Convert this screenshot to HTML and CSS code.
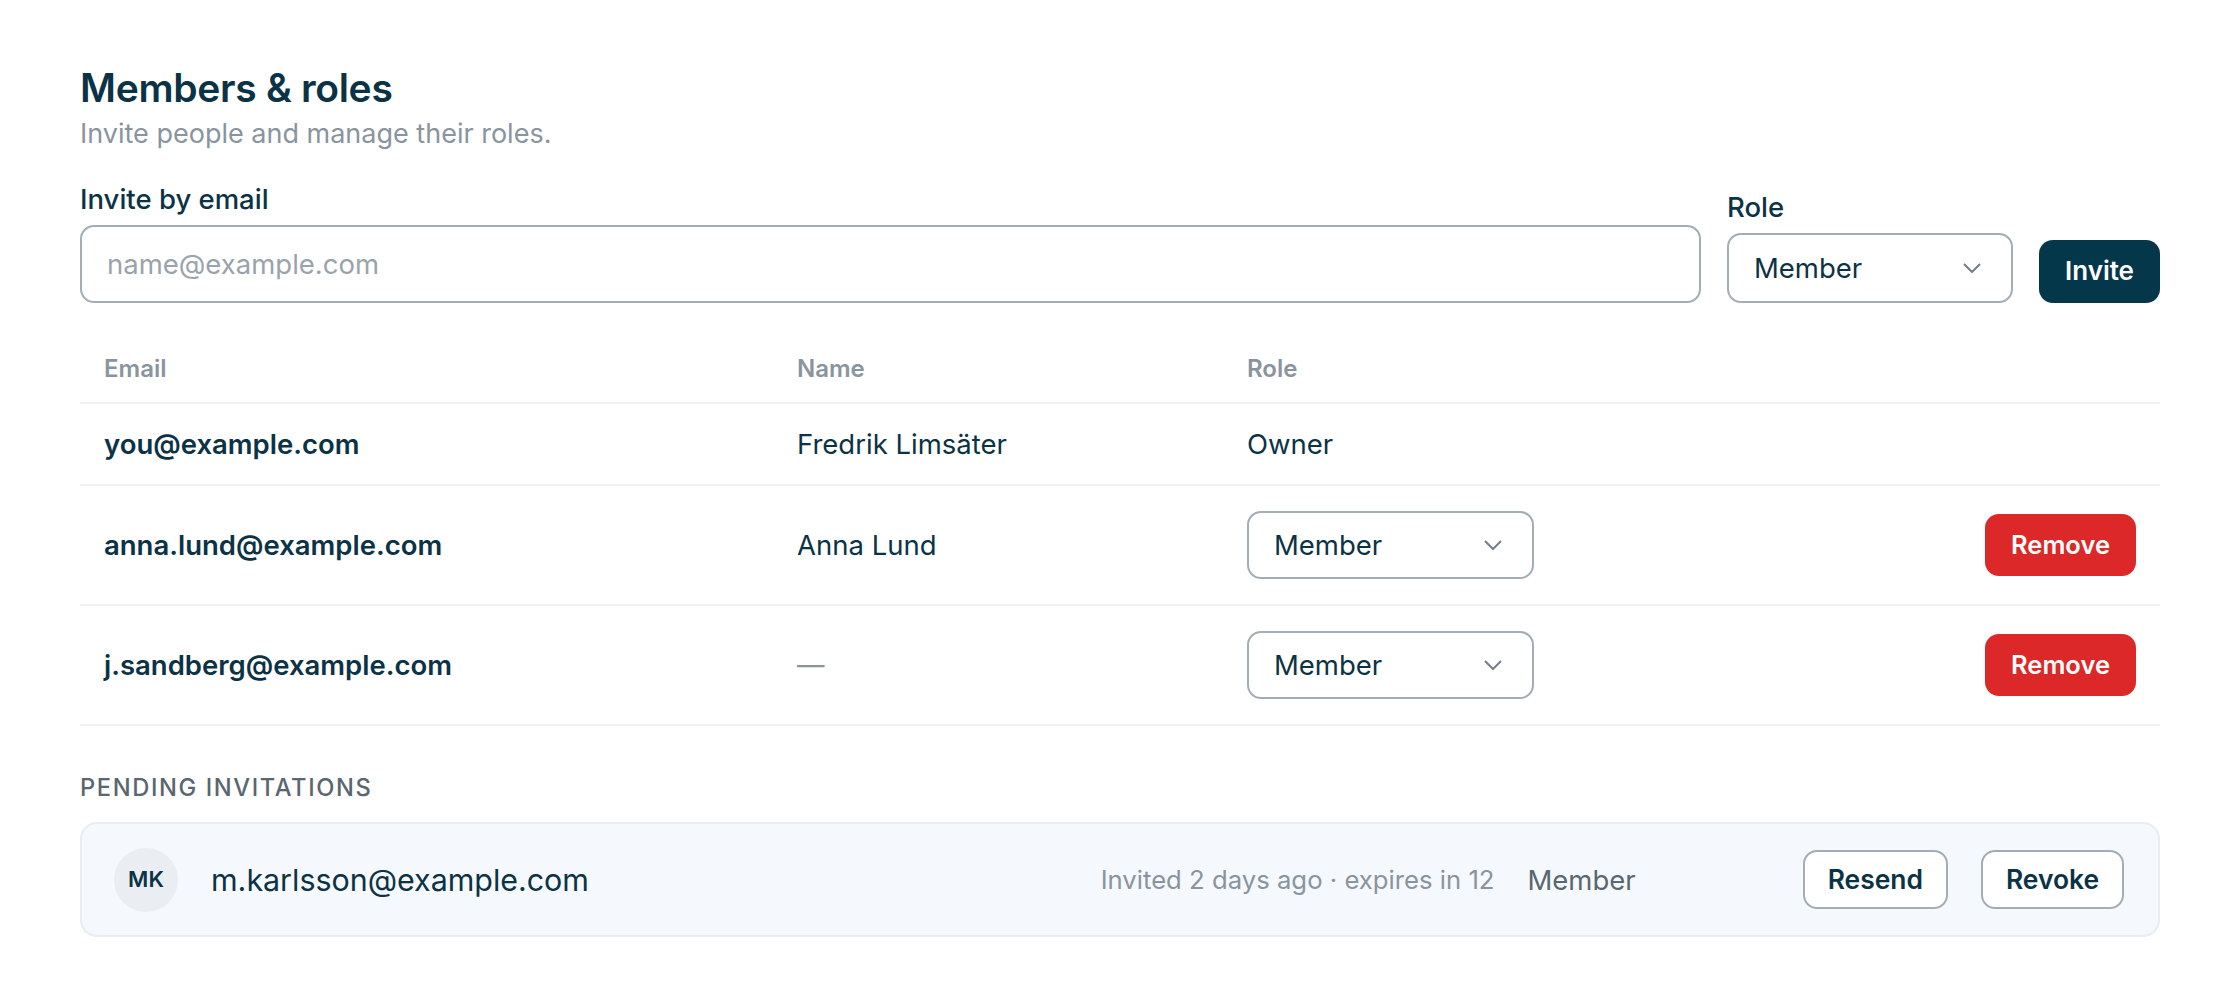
FILE: index.html
```html
<!DOCTYPE html>
<html lang="en">
<head>
    <meta charset="UTF-8">
    <meta name="viewport" content="width=device-width, initial-scale=1.0">
    <title>Members &amp; roles</title>
    <link rel="stylesheet" href="styles.css">
</head>
<body>

    <main class="page">

        <!-- Heading -->
        <header class="page-head">
            <h1>Members &amp; roles</h1>
            <p class="subtitle">Invite people and manage their roles.</p>
        </header>

        <!-- Invite form -->
        <form class="invite-form">
            <label class="field field-email">
                <span class="field-label">Invite by email</span>
                <input class="text-input" type="email" placeholder="name@example.com">
            </label>
            <label class="field field-role">
                <span class="field-label">Role</span>
                <span class="select">
                    <select>
                        <option>Member</option>
                        <option>Admin</option>
                    </select>
                    <svg class="chevron" viewBox="0 0 18 10" aria-hidden="true"><path d="M1 1l8 8 8-8"/></svg>
                </span>
            </label>
            <button class="btn btn-primary" type="button">Invite</button>
        </form>

        <!-- Members table -->
        <table class="members">
            <colgroup>
                <col class="col-email">
                <col class="col-name">
                <col class="col-role">
                <col class="col-actions">
            </colgroup>
            <thead>
                <tr>
                    <th>Email</th>
                    <th>Name</th>
                    <th>Role</th>
                    <th></th>
                </tr>
            </thead>
            <tbody>
                <tr class="row-plain">
                    <td class="email">you@example.com</td>
                    <td>Fredrik Limsäter</td>
                    <td>Owner</td>
                    <td></td>
                </tr>
                <tr>
                    <td class="email">anna.lund@example.com</td>
                    <td>Anna Lund</td>
                    <td>
                        <span class="select">
                            <select>
                                <option>Member</option>
                                <option>Admin</option>
                            </select>
                            <svg class="chevron" viewBox="0 0 18 10" aria-hidden="true"><path d="M1 1l8 8 8-8"/></svg>
                        </span>
                    </td>
                    <td class="actions"><button class="btn btn-danger" type="button">Remove</button></td>
                </tr>
                <tr>
                    <td class="email">j.sandberg@example.com</td>
                    <td class="muted">—</td>
                    <td>
                        <span class="select">
                            <select>
                                <option>Member</option>
                                <option>Admin</option>
                            </select>
                            <svg class="chevron" viewBox="0 0 18 10" aria-hidden="true"><path d="M1 1l8 8 8-8"/></svg>
                        </span>
                    </td>
                    <td class="actions"><button class="btn btn-danger" type="button">Remove</button></td>
                </tr>
            </tbody>
        </table>

        <!-- Pending invitations -->
        <section class="pending">
            <h2>Pending invitations</h2>
            <div class="invite-card">
                <span class="avatar">MK</span>
                <span class="invite-email">m.karlsson@example.com</span>
                <span class="invite-meta">Invited 2 days ago · expires in 12</span>
                <span class="invite-role">Member</span>
                <div class="invite-actions">
                    <button class="btn btn-outline" type="button">Resend</button>
                    <button class="btn btn-outline" type="button">Revoke</button>
                </div>
            </div>
        </section>

    </main>

</body>
</html>
```

FILE: styles.css
```css
body {
    margin: 0;
    background: #ffffff;
    color: #0b3345;
    font-family: Inter, "Noto Sans", sans-serif;
    font-size: 27.5px;
    line-height: 1.4;
}

.page {
    padding: 65px 80px 60px;
}

/* Heading */
.page-head h1 {
    margin: 0;
    font-size: 39px;
    font-weight: 600;
    line-height: 1.2;
    letter-spacing: -0.3px;
}

.subtitle {
    margin: 3px 0 0;
    color: #8a949e;
    font-size: 27px;
}

/* Invite form */
.invite-form {
    display: flex;
    align-items: flex-end;
    gap: 26px;
    margin-top: 27px;
}

.field {
    display: flex;
    flex-direction: column;
    gap: 7px;
}

.field-email {
    flex: 1;
}

.field-label {
    font-weight: 500;
}

.text-input {
    height: 78px;
    box-sizing: border-box;
    padding: 0 25px;
    border: 2px solid #a3adb5;
    border-radius: 14px;
    font: inherit;
    color: #0b3345;
    outline: none;
}

.text-input::placeholder {
    color: #9aa3ab;
}

.select {
    position: relative;
    display: inline-flex;
    width: 287px;
}

.select select {
    width: 100%;
    height: 68px;
    padding: 0 60px 0 25px;
    border: 2px solid #a3adb5;
    border-radius: 14px;
    background: #fff;
    font: inherit;
    color: #0b3345;
    appearance: none;
    -webkit-appearance: none;
}

.chevron {
    position: absolute;
    right: 32px;
    top: 50%;
    width: 18px;
    height: 10px;
    margin-top: -5px;
    fill: none;
    stroke: #737e88;
    stroke-width: 2;
    pointer-events: none;
}

.field-role .select {
    width: 286px;
}

.field-role .select select {
    height: 70px;
}

/* Buttons */
.btn {
    font: inherit;
    font-weight: 600;
    border-radius: 14px;
    cursor: pointer;
}

.btn-primary {
    height: 63px;
    padding: 0 26px;
    border: 0;
    background: #04374a;
    color: #fff;
    font-size: 26px;
}

.btn-danger {
    height: 62px;
    padding: 0 26px;
    border: 0;
    background: #dc2828;
    color: #fff;
    font-size: 25.5px;
}

.btn-outline {
    height: 59px;
    padding: 0 23px;
    border: 2px solid #a3adb5;
    background: #fff;
    color: #0b3345;
    font-size: 26.4px;
}

/* Members table */
.members {
    width: 100%;
    margin-top: 35px;
    border-collapse: collapse;
    table-layout: fixed;
}

.col-email { width: 693px; }
.col-name { width: 450px; }
.col-actions { width: 300px; }

.members th {
    padding: 14px 24px 16px;
    text-align: left;
    color: #8a949e;
    font-size: 24px;
    font-weight: 600;
    border-bottom: 2px solid #edf1f5;
}

.members td {
    padding: 25px 24px;
    border-bottom: 2px solid #edf1f5;
    vertical-align: middle;
}

.members .row-plain td {
    padding: 21px 24px;
}

.members td.email {
    font-weight: 600;
}

.members td.muted {
    color: #8a949e;
}

.members td.actions {
    text-align: right;
}

/* Pending invitations */
.pending {
    margin-top: 45px;
}

.pending h2 {
    margin: 0 0 18px;
    color: #5a6670;
    font-size: 23.7px;
    font-weight: 500;
    letter-spacing: 1.6px;
    text-transform: uppercase;
}

.invite-card {
    display: flex;
    align-items: center;
    gap: 33px;
    padding: 23.5px 34px 23.5px 32px;
    background: #f5f8fc;
    border: 2px solid #e9edf2;
    border-radius: 17px;
}

.avatar {
    width: 64px;
    height: 64px;
    border-radius: 50%;
    background: #eaeef3;
    display: flex;
    align-items: center;
    justify-content: center;
    font-size: 22px;
    font-weight: 600;
}

.invite-email {
    flex: 1;
    font-size: 30.4px;
}

.invite-meta {
    color: #8a949e;
    font-size: 25.7px;
}

.invite-role {
    color: #5a6670;
    margin-right: 134px;
}

.invite-actions {
    display: flex;
    gap: 33px;
}
```
